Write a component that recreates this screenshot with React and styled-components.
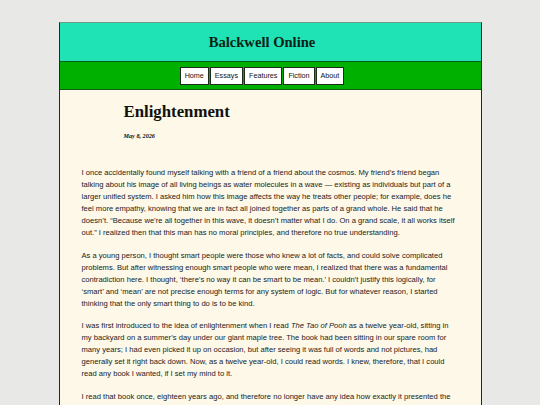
import styled, { createGlobalStyle } from 'styled-components';

const GlobalStyle = createGlobalStyle`
  html, body {
    margin: 0;
    padding: 0;
    background: #e8e8e6;
  }
  body {
    font-family: "Liberation Sans", Arial, sans-serif;
  }
`;

const navItems = ['Home', 'Essays', 'Features', 'Fiction', 'About'];

function App() {
  return (
    <>
      <GlobalStyle />
      <Frame>
        <Masthead>
          <SiteTitle>Balckwell Online</SiteTitle>
        </Masthead>
        <NavBar>
          {navItems.map(item => (
            <NavButton key={item} href="#">
              {item}
            </NavButton>
          ))}
        </NavBar>
        <Article>
          <ArticleTitle>Enlightenment</ArticleTitle>
          <DateLine>May 8, 2026</DateLine>
          <Body>
            <p>
              I once accidentally found myself talking with a friend of a friend about the cosmos. My
              friend’s friend began talking about his image of all living beings as water molecules in a
              wave — existing as individuals but part of a larger unified system. I asked him how this
              image affects the way he treats other people; for example, does he feel more empathy,
              knowing that we are in fact all joined together as parts of a grand whole. He said that he
              doesn’t. “Because we’re all together in this wave, it doesn’t matter what I do. On a grand
              scale, it all works itself out.” I realized then that this man has no moral principles, and
              therefore no true understanding.
            </p>
            <p>
              As a young person, I thought smart people were those who knew a lot of facts, and could
              solve complicated problems. But after witnessing enough smart people who were mean, I
              realized that there was a fundamental contradiction here. I thought, ‘there’s no way it can
              be smart to be mean.’ I couldn’t justify this logically, for ‘smart’ and ‘mean’ are not
              precise enough terms for any system of logic. But for whatever reason, I started thinking
              that the only smart thing to do is to be kind.
            </p>
            <p>
              I was first introduced to the idea of enlightenment when I read <em>The Tao of Pooh</em> as
              a twelve year-old, sitting in my backyard on a summer’s day under our giant maple tree. The
              book had been sitting in our spare room for many years; I had even picked it up on occasion,
              but after seeing it was full of words and not pictures, had generally set it right back
              down. Now, as a twelve year-old, I could read words. I knew, therefore, that I could read
              any book I wanted, if I set my mind to it.
            </p>
            <p>
              I read that book once, eighteen years ago, and therefore no longer have any idea how exactly
              it presented the Tao. But I recall coming away with the notion that the simplest things in
              life are usually the most important, and that the wisest among us tend to be the happiest.
            </p>
          </Body>
        </Article>
      </Frame>
    </>
  );
}

const Frame = styled.div`
  width: 421px;
  margin: 22px auto 0;
  border: 1px solid #1f2a24;
  border-top-color: #6f9d8c;
  border-bottom: none;
  background: #fdf8e7;
`;

const Masthead = styled.header`
  background: #20e3b5;
  padding: 11px 16px 10px 0;
  border-bottom: 1px solid #0b5e12;
  text-align: center;
`;

const SiteTitle = styled.h1`
  margin: 0;
  font-family: "Liberation Serif", "Times New Roman", serif;
  font-weight: bold;
  font-size: 14.6px;
  line-height: 17px;
  color: #0d1f18;
`;

const NavBar = styled.nav`
  display: flex;
  justify-content: center;
  gap: 1px;
  background: #00b000;
  padding: 5px 16px 4px 0;
  border-bottom: 1px solid #0b5e12;
`;

const NavButton = styled.a`
  display: block;
  padding: 4px 4px;
  background: #ffffff;
  border: 1px solid #1a2e1a;
  font-family: "Liberation Sans", Arial, sans-serif;
  font-size: 7.2px;
  line-height: 8px;
  color: #111;
  text-decoration: none;
`;

const Article = styled.main`
  padding: 12px 22px 20px;
  color: #222;
`;

const ArticleTitle = styled.h2`
  margin: 0 0 10px 42px;
  font-family: "Liberation Serif", "Times New Roman", serif;
  font-weight: bold;
  font-size: 16.8px;
  line-height: 20px;
  color: #111;
`;

const DateLine = styled.div`
  margin: 0 0 27px 42px;
  font-family: "Liberation Serif", "Times New Roman", serif;
  font-weight: bold;
  font-style: italic;
  font-size: 6.2px;
  line-height: 8px;
  color: #111;
`;

const Body = styled.div`
  font-family: "Liberation Sans", Arial, sans-serif;
  font-size: 7.6px;
  line-height: 12px;
  color: #222;

  p {
    margin: 0 0 10.5px;
  }
`;

export default App;
